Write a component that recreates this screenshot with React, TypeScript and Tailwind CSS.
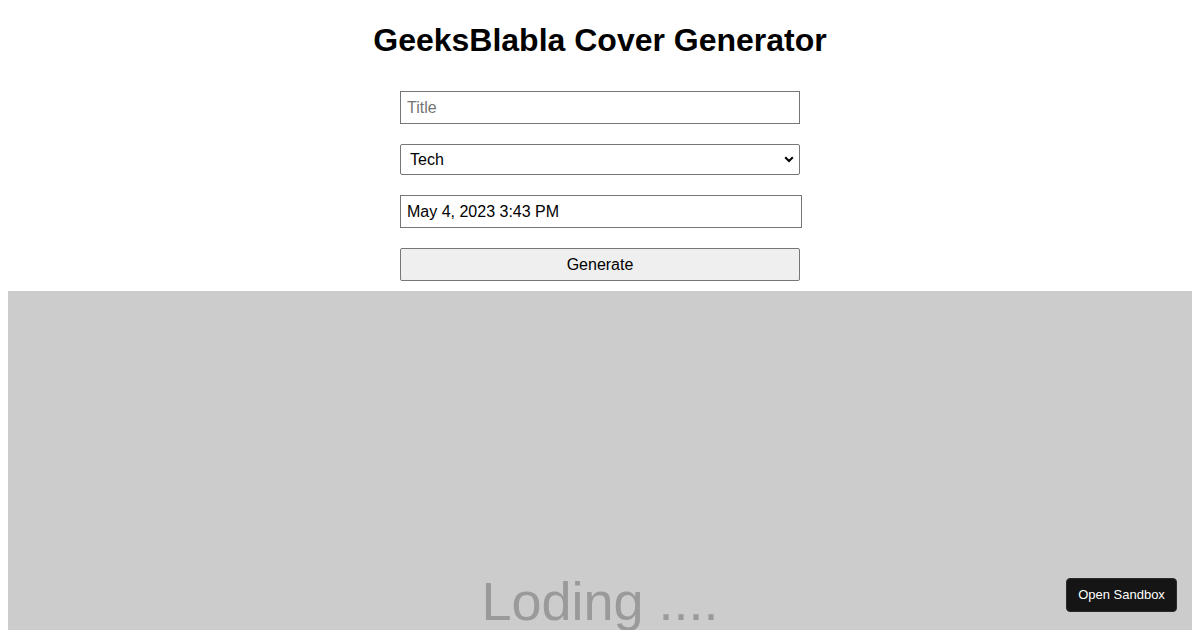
import React, { useState } from 'react';

const categories = ['Tech', 'Design', 'Business', 'Life'];

export default function App() {
  const [title, setTitle] = useState('');
  const [category, setCategory] = useState('Tech');
  const [date, setDate] = useState('May 4, 2023 3:43 PM');

  return (
    <div className="min-h-screen bg-white p-2 font-['Liberation_Sans',Arial,sans-serif] text-black">
      <h1 className="mt-[14px] text-center text-[32px] font-bold leading-[37px]">GeeksBlabla Cover Generator</h1>

      {/* Form */}
      <div className="mt-[32px] flex flex-col items-center gap-[20px]">
        <input
          value={title}
          onChange={(e) => setTitle(e.target.value)}
          placeholder="Title"
          className="box-border h-[33px] w-[400px] border border-[#767676] px-[6px] text-[16px] placeholder:text-[#757575] outline-none"
        />
        <div className="relative w-[400px]">
          <select
            value={category}
            onChange={(e) => setCategory(e.target.value)}
            className="box-border h-[31px] w-[400px] appearance-none rounded-[2px] border border-[#767676] bg-white pl-[9px] text-[16px] outline-none"
          >
            {categories.map((c) => (
              <option key={c}>{c}</option>
            ))}
          </select>
          <svg className="pointer-events-none absolute right-[6px] top-[12px]" width="10" height="7" viewBox="0 0 10 7">
            <path d="M1.2 1.2 L5 5 L8.8 1.2" fill="none" stroke="#000" strokeWidth="2" />
          </svg>
        </div>
        <input
          value={date}
          onChange={(e) => setDate(e.target.value)}
          className="ml-[2px] box-border h-[33px] w-[402px] border border-[#767676] px-[6px] text-[16px] outline-none"
        />
        <button className="box-border h-[33px] w-[400px] rounded-[2px] border border-[#767676] bg-[#efefef] text-[16px]">
          Generate
        </button>
      </div>

      {/* Preview */}
      <div className="mt-[10px] h-[630px] bg-[#cccccc] pt-[279px] text-center">
        <span className="text-[54px] leading-[62px] text-[#9a9a9a]">Loding ....</span>
      </div>

      <button className="fixed bottom-[18px] right-[23px] h-[34px] w-[111px] rounded-[4px] border border-[#2a2a2a] bg-[#151515] text-[13px] text-white">
        Open Sandbox
      </button>
    </div>
  );
}
